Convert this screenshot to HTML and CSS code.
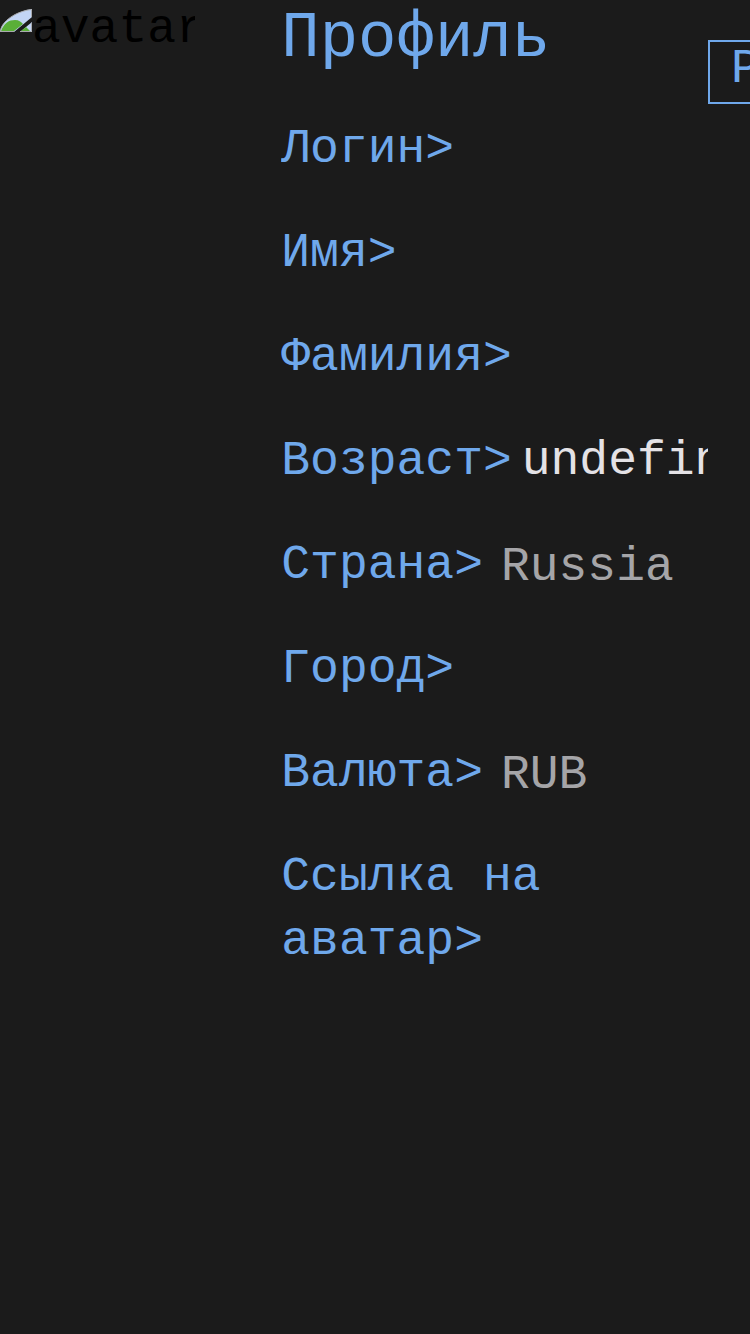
FILE: index.html
```html
<!DOCTYPE html>
<html lang="ru">
<head>
<meta charset="utf-8">
<title>Профиль</title>
<link rel="stylesheet" href="styles.css">
</head>
<body>
<main class="profile">
  <div class="avatar">
    <svg class="avatar-icon" width="32" height="23" viewBox="0 0 32 23">
      <path d="M0 23C1 12 17 2 32 0V8L14 23Z" fill="#c3d5f5"/>
      <path d="M1 22C4 14 9 11 15 11C19 11 21 13 23 15L14 22Z" fill="#5aaf38"/>
      <path d="M32 13V23H20Z" fill="#c3d5f5"/>
      <path d="M26 18L30 22H21Z" fill="#5aaf38"/>
      <path d="M.5 22.500C1 12 17 2 31.500 .5V8M0 22.500H14M20 22.500H31.500V14" fill="none" stroke="#a9aaad"/>
    </svg>
    <span class="avatar-alt">avatar</span>
  </div>
  <section class="info">
    <h1 class="title">Профиль</h1>
    <div class="row"><span class="label">Логин&gt;</span></div>
    <div class="row"><span class="label">Имя&gt;</span></div>
    <div class="row"><span class="label">Фамилия&gt;</span></div>
    <div class="row"><span class="label">Возраст&gt;</span><span class="value">undefined</span></div>
    <div class="row"><span class="label">Страна&gt;</span><span class="select">Russia</span></div>
    <div class="row"><span class="label">Город&gt;</span></div>
    <div class="row"><span class="label">Валюта&gt;</span><span class="select">RUB</span></div>
    <div class="row"><span class="label">Ссылка на аватар&gt;</span></div>
  </section>
  <button class="edit">Редактировать</button>
</main>
</body>
</html>
```

FILE: styles.css
```css
body {
  margin: 0;
  background: #1b1b1b;
  font: 48px/64px "Liberation Mono", monospace;
  overflow: hidden;
}
.profile {
  display: flex;
  align-items: flex-start;
  width: 750px;
  height: 1334px;
  overflow: hidden;
}
.avatar {
  display: flex;
  flex: none;
  width: 195px;
  margin-right: 86.300px;
  overflow: hidden;
  color: #000;
}
.avatar-icon { flex: none; margin-top: 9px; }
.avatar-alt { line-height: 58px; }
.info {
  flex: none;
  width: 426.700px;
  color: #6fa8eb;
}
.title {
  margin: 0 0 39px;
  font-size: 64px;
  font-weight: 400;
  line-height: 78px;
}
.row {
  display: flex;
  margin-bottom: 40px;
  overflow: hidden;
}
.row .label { margin-left: 0; }
.value {
  margin-left: 10px;
  color: #e4e2e6;
}
.select {
  padding-top: 2px;
  margin: 0 0 -2px 18px;
  color: #a5a5a8;
}
.edit {
  flex: none;
  box-sizing: border-box;
  height: 64px;
  margin: 40px 0 0;
  padding: 0 20px 7px 21px;
  border: 2px solid #6fa8eb;
  border-radius: 0;
  background: none;
  color: #6fa8eb;
  font: inherit;
  line-height: 52px;
}
```
